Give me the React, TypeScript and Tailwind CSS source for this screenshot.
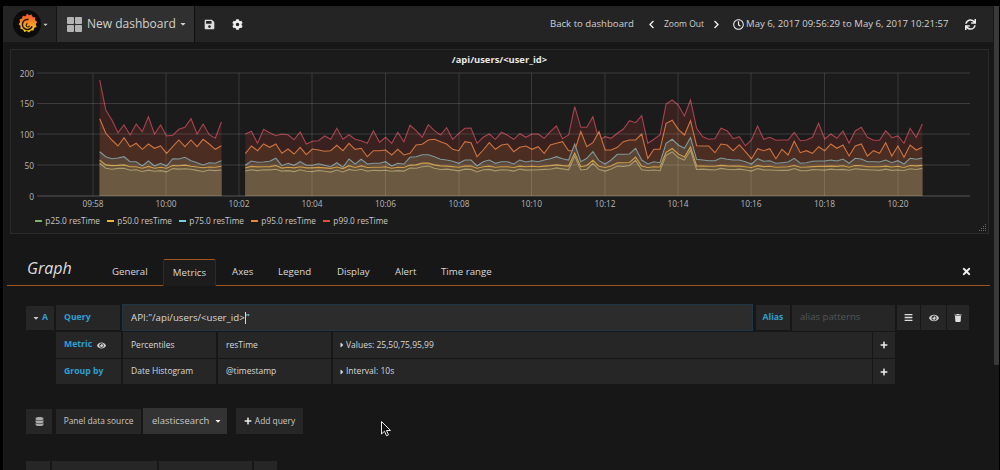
import React from "react";
import {
  FaCaretDown,
  FaCaretRight,
  FaChevronLeft,
  FaChevronRight,
  FaCog,
  FaDatabase,
  FaEye,
  FaPlus,
  FaRegClock,
  FaSave,
  FaSync,
  FaTimes,
  FaTrash,
  FaBars,
} from "react-icons/fa";

// series are y values read off the picture (zoomed coords, y = 60 + v / 3)
const p99A = [60, 150, 180, 218, 195, 225, 192, 215, 170, 222, 195, 228, 226, 208, 202, 176, 222, 192, 224, 235, 186];
const p95A = [176, 220, 240, 258, 233, 260, 250, 268, 252, 265, 258, 280, 260, 240, 260, 240, 260, 238, 252, 268, 257];
const p75A = [275, 290, 296, 294, 290, 305, 305, 318, 303, 318, 310, 318, 296, 297, 292, 302, 308, 315, 308, 310, 302];

const p99B = [
  222, 214, 250, 208, 218, 227, 222, 224, 239, 216, 252, 244, 242, 228, 238,
  205, 238, 224, 238, 242, 250, 212, 247, 232, 250, 217, 245, 196, 212, 232, 194, 212, 225, 203, 238, 220, 205, 204,
  250, 232, 222, 238, 217, 226, 238, 221, 232, 222, 222, 235, 215, 198, 236, 225, 140, 202, 202, 170, 240, 230, 235,
  220, 207, 182, 188, 167, 250, 238, 225,
  132, 120, 135, 168, 120, 205, 230, 238, 236, 205, 212, 236, 230, 257, 240, 198, 238, 232, 241, 240, 240, 217, 242,
  240, 232, 190, 237, 222, 235, 213, 250, 213, 202, 232, 241, 241, 212, 233, 228, 250, 205, 232, 192,
];
const p95B = [
  281, 258, 272, 252, 262, 252, 280, 267, 282, 262, 284, 267, 270, 274, 272,
  256, 272, 250, 268, 265, 290, 272, 272, 270, 285, 268, 285, 280, 255, 253, 240, 238, 245, 252, 268, 272, 245, 248,
  290, 270, 248, 268, 255, 252, 275, 262, 258, 268, 260, 280, 255, 250, 245, 272, 272, 214, 260, 248, 215, 270, 270,
  262, 245, 240, 240, 222, 295, 268, 268,
  190, 181, 208, 225, 182, 257, 258, 258, 278, 252, 255, 272, 254, 275, 296, 266, 272, 266, 296, 268, 285, 244, 278,
  272, 280, 260, 272, 252, 265, 255, 288, 258, 252, 288, 272, 280, 248, 288, 258, 292, 255, 270, 262,
];
const p75B = [
  316, 303, 307, 306, 304, 295, 317, 310, 316, 305, 316, 316, 311, 316, 320,
  308, 322, 297, 312, 298, 312, 310, 310, 305, 318, 310, 312, 292, 290, 284, 284, 290, 298, 300, 304, 310, 300, 300,
  318, 305, 300, 310, 305, 305, 312, 300, 306, 302, 305, 300, 296, 290, 296, 300, 252, 305, 295, 275, 302, 312, 300,
  283, 283, 282, 265, 300, 312, 305, 308,
  250, 238, 255, 265, 233, 298, 300, 302, 302, 294, 298, 300, 300, 305, 312, 296, 304, 302, 310, 308, 306, 295, 310,
  308, 304, 303, 303, 300, 303, 297, 310, 295, 297, 305, 305, 306, 300, 308, 302, 312, 295, 298, 294,
];

const toP50 = (v: number) => (v >= 290 ? 320 + (v - 305) * 0.35 : 315 - (290 - v) * 0.95);
const toP25 = (v: number, i: number) => toP50(v) + 9 + (i % 3);

const segA = { x0: 98.7, x1: 220.4 };
const segB = { x0: 244.3, x1: 921.3 };

function pts(vals: number[], seg: { x0: number; x1: number }) {
  const step = (seg.x1 - seg.x0) / (vals.length - 1);
  return vals.map((v, i) => `${(seg.x0 + i * step).toFixed(1)},${(60 + v / 3).toFixed(1)}`).join(" ");
}

function Series({ vals, fill, stroke }: { vals: number[]; fill: string; stroke: string }) {
  return (
    <>
      <polygon points={`${segA.x0},196 ${pts(vals.slice(0, 21), segA)} ${segA.x1},196`} fill={fill} />
      <polygon points={`${segB.x0},196 ${pts(vals.slice(21), segB)} ${segB.x1},196`} fill={fill} />
      <polyline points={pts(vals.slice(0, 21), segA)} fill="none" stroke={stroke} strokeWidth="1.1" />
      <polyline points={pts(vals.slice(21), segB)} fill="none" stroke={stroke} strokeWidth="1.1" />
    </>
  );
}

const yTicks = [
  { label: "200", y: 73 },
  { label: "150", y: 103.5 },
  { label: "100", y: 134 },
  { label: "50", y: 165 },
  { label: "0", y: 196 },
];
const xTicks = [
  { label: "09:58", x: 92 },
  { label: "10:00", x: 165 },
  { label: "10:02", x: 238 },
  { label: "10:04", x: 311 },
  { label: "10:06", x: 384.5 },
  { label: "10:08", x: 458 },
  { label: "10:10", x: 530.5 },
  { label: "10:12", x: 604 },
  { label: "10:14", x: 677 },
  { label: "10:16", x: 750 },
  { label: "10:18", x: 823.5 },
  { label: "10:20", x: 897 },
];

function Chart() {
  const p99 = [...p99A, ...p99B];
  const p95 = [...p95A, ...p95B];
  const p75 = [...p75A, ...p75B];
  const p50 = p75.map(toP50);
  const p25 = p75.map(toP25);
  return (
    <svg width="979" height="144" viewBox="10 66 979 144" className="block">
      <Series vals={p99} fill="#38211e" stroke="#a8434f" />
      <Series vals={p95} fill="#4b2d21" stroke="#cf7440" />
      <Series vals={p75} fill="#5a4436" stroke="#7f9a9c" />
      <Series vals={p50} fill="#66523b" stroke="#cf9f48" />
      <Series vals={p25} fill="#6b5a41" stroke="#a89a6c" />
      {yTicks.map((t) => (
        <g key={t.label}>
          <line x1="36" x2="969" y1={t.y} y2={t.y} stroke="#ffffff" strokeOpacity={t.y === 196 ? 0.25 : 0.14} />
          <text x="33" y={t.y + 3.5} textAnchor="end" fontSize="8.3" fill="#b9b9b9">
            {t.label}
          </text>
        </g>
      ))}
      {xTicks.map((t) => (
        <g key={t.label}>
          <line x1={t.x} x2={t.x} y1="73" y2="196" stroke="#ffffff" strokeOpacity="0.13" />
          <text x={t.x} y="207" textAnchor="middle" fontSize="8.3" fill="#b9b9b9">
            {t.label}
          </text>
        </g>
      ))}
    </svg>
  );
}

function GrafanaLogo() {
  return (
    <svg width="28" height="28" viewBox="0 0 28 28">
      <defs>
        <linearGradient id="gf" x1="0" y1="1" x2="0" y2="0">
          <stop offset="0" stopColor="#fcd01f" />
          <stop offset="1" stopColor="#f1502a" />
        </linearGradient>
      </defs>
      <circle cx="14" cy="14" r="14" fill="#0b0b0b" />
      <path
        d="M14 3.5l2 1.8 2.7-.8 1 2.4 2.6.7-.2 2.7 2.1 1.7-1.5 2.2.9 2.6-2.4 1.1-.7 2.7-2.7-.1-1.8 2-2.2-1.4-2.6.8-1.1-2.4-2.7-.8.2-2.7-2-1.7 1.5-2.2-.6-2.6 2.5-1.1.8-2.6 2.7.4z"
        fill="url(#gf)"
      />
      <path d="M15.5 9.6a5 5 0 1 0 3.6 6.8" fill="none" stroke="#1a120a" strokeWidth="1.5" />
      <path d="M14.6 13.6a1.7 1.7 0 1 0 1.9 2" fill="none" stroke="#1a120a" strokeWidth="1.1" />
    </svg>
  );
}

function Legend() {
  const items = [
    { c: "bg-[#7EB26D]", t: "p25.0 resTime" },
    { c: "bg-[#EAB839]", t: "p50.0 resTime" },
    { c: "bg-[#6ED0E0]", t: "p75.0 resTime" },
    { c: "bg-[#EF843C]", t: "p95.0 resTime" },
    { c: "bg-[#E24D42]", t: "p99.0 resTime" },
  ];
  return (
    <div className="flex items-center gap-[7px] pl-[24px] mt-[5px] text-[8.3px] leading-[12px] text-[#c8c8c8]">
      {items.map((i) => (
        <div key={i.t} className="flex items-center gap-[3px] w-[65px] whitespace-nowrap">
          <span className={`w-[9px] h-[2px] ${i.c}`} />
          <span>{i.t}</span>
        </div>
      ))}
    </div>
  );
}

function Cell({ w, className, children }: { w: string; className?: string; children?: React.ReactNode }) {
  return <div className={`flex items-center shrink-0 whitespace-nowrap bg-[#262626] ${w} ${className ?? ""}`}>{children}</div>;
}

export default function App() {
  return (
    <div
      className="relative w-[1000px] h-[470px] overflow-hidden bg-black pt-[6px] pl-[3px] pr-px text-[#d8d9da]"
      style={{ fontFamily: '"Open Sans", sans-serif' }}
    >
      <div className="relative w-[996px] h-[464px] flex flex-col bg-[#171717]">
        {/* Navbar */}
        <div className="flex items-center w-[990px] h-[36px] shrink-0 bg-[#242425] text-[#d0d0d0]">
          <div className="flex items-center w-[54px] h-full pl-[10px] border-r border-[#141414]">
            <GrafanaLogo />
            <FaCaretDown className="ml-[1px] text-[7px] text-[#cccccc]" />
          </div>
          <div className="flex items-center w-[138px] h-full pl-[10px] bg-[#303031] border-r border-[#0e0e0e]">
            <span className="grid grid-cols-2 gap-px w-[15px] h-[15px] mr-[5px]">
              <i className="bg-[#b4b4b4] rounded-[1px]" />
              <i className="bg-[#b4b4b4] rounded-[1px]" />
              <i className="bg-[#b4b4b4] rounded-[1px]" />
              <i className="bg-[#b4b4b4] rounded-[1px]" />
            </span>
            <span className="text-[12px] whitespace-nowrap">New dashboard</span>
            <FaCaretDown className="ml-[3px] text-[8px]" />
          </div>
          <FaSave className="ml-[9px] text-[11px] text-[#dddddd]" />
          <FaCog className="ml-[17px] text-[11px] text-[#eeeeee]" />
          <span className="ml-[307px] w-[84px] text-[9.6px] whitespace-nowrap">Back to dashboard</span>
          <FaChevronLeft className="ml-[13px] text-[9px] text-[#eeeeee]" />
          <span className="ml-[8px] w-[40px] text-[8.5px] whitespace-nowrap">Zoom Out</span>
          <FaChevronRight className="ml-[8px] text-[9px] text-[#eeeeee]" />
          <FaRegClock className="ml-[12px] text-[11px] text-[#eeeeee]" />
          <span className="ml-[2px] w-[203px] text-[9.6px] whitespace-nowrap">May 6, 2017 09:56:29 to May 6, 2017 10:21:57</span>
          <FaSync className="ml-[16px] text-[11px] text-[#eeeeee]" />
        </div>

        {/* Graph panel */}
        <div className="ml-[7px] mt-[7px] w-[979px] h-[185px] shrink-0 bg-[#1b1b1b] border border-[#2a2a2a] relative">
          <div className="text-center text-[9.4px] leading-[14px] font-bold text-[#e8e8e8] pt-[3px] h-[16px]">
            {"/api/users/<user_id>"}
          </div>
          <Chart />
          <Legend />
          <svg width="7" height="7" viewBox="0 0 7 7" className="absolute right-[2px] bottom-[2px]">
            <path d="M6 0h1v1H6zM4 2h1v1H4zM6 2h1v1H6zM2 4h1v1H2zM4 4h1v1H4zM6 4h1v1H6zM0 6h1v1H0zM2 6h1v1H2zM4 6h1v1H4zM6 6h1v1H6z" fill="#666" />
          </svg>
        </div>

        {/* Editor tabs */}
        <div className="ml-[4px] mt-[25px] w-[983px] h-[27px] shrink-0 flex items-end border-b border-[#a0561f] relative text-[9.7px]">
          <span className="ml-[20px] mb-[6px] w-[45px] text-[16px] leading-[22px] italic text-[#dddddd]">Graph</span>
          <span className="ml-[40px] mb-[6px] w-[35px] leading-[14px] whitespace-nowrap">General</span>
          <span className="ml-[16px] -mb-px h-[27px] w-[53px] flex items-center justify-center bg-[#1c1c1c] border border-b-0 border-[#2e2a26] border-t-[#a0561f] rounded-t-[2px]">
            Metrics
          </span>
          <span className="ml-[16px] mb-[6px] w-[20px] leading-[14px]">Axes</span>
          <span className="ml-[26px] mb-[6px] w-[33px] leading-[14px]">Legend</span>
          <span className="ml-[26px] mb-[6px] w-[32px] leading-[14px]">Display</span>
          <span className="ml-[26px] mb-[6px] w-[20px] leading-[14px]">Alert</span>
          <span className="ml-[26px] mb-[6px] leading-[14px] whitespace-nowrap">Time range</span>
          <FaTimes className="absolute right-[18px] top-[7px] text-[11px] text-[#eeeeee]" />
        </div>

        {/* Query row */}
        <div className="ml-[23px] mt-[18px] flex items-center h-[27px] shrink-0 text-[8.7px]">
          <Cell w="w-[28px] h-[24px]" className="justify-center gap-[2px] bg-[#222222] text-[#2f9fd0] font-bold">
            <FaCaretDown className="text-[8px] text-[#cccccc]" />A
          </Cell>
          <Cell w="w-[64px] h-[25px] ml-[2px] pl-[8px] pt-px" className="text-[#2f9fd0] font-bold">
            Query
          </Cell>
          <div className="ml-[2px] w-[631px] h-[27px] flex items-center pl-[8px] pt-px bg-[#2c2c2d] border border-[#1f3644] text-[9.7px] text-[#d8d9da]">
            {'API:"/api/users/<user_id>'}
            <span className="w-px h-[12px] bg-[#d8d9da]" />"
          </div>
          <Cell w="w-[34px] h-[25px] ml-[3px] pt-px" className="justify-center text-[#2f9fd0] font-bold">
            Alias
          </Cell>
          <Cell w="w-[103px] h-[26px] ml-[2px] pl-[8px]" className="bg-[#2d2d2e] text-[#555555] text-[9.6px]">
            alias patterns
          </Cell>
          <Cell w="w-[23px] h-[25px] ml-[2px]" className="justify-center text-[#dddddd]">
            <FaBars className="text-[9px]" />
          </Cell>
          <Cell w="w-[25px] h-[25px] ml-px" className="justify-center text-[#cfcfcf]">
            <FaEye className="text-[10px]" />
          </Cell>
          <Cell w="w-[22px] h-[25px] ml-px" className="justify-center text-[#dddddd]">
            <FaTrash className="text-[8px]" />
          </Cell>
        </div>

        {/* Metric row */}
        <div className="ml-[53px] mt-px flex h-[26px] shrink-0 text-[8.5px] gap-[2px]">
          <Cell w="w-[65px] pl-[8px]" className="text-[#2f9fd0] font-bold text-[8.7px] gap-[5px]">
            Metric
            <FaEye className="text-[9px] text-[#cfcfcf]" />
          </Cell>
          <Cell w="w-[93px] pl-[8px]">Percentiles</Cell>
          <Cell w="w-[113px] pl-[8px]">resTime</Cell>
          <Cell w="w-[539px] pl-[5px]">
            <FaCaretRight className="text-[8px]" />
            <span>Values: 25,50,75,95,99</span>
          </Cell>
          <Cell w="w-[22px] -ml-px" className="justify-center text-[#eeeeee]">
            <FaPlus className="text-[8px]" />
          </Cell>
        </div>

        {/* Group by row */}
        <div className="ml-[53px] mt-px flex h-[25px] shrink-0 text-[8.5px] gap-[2px]">
          <Cell w="w-[65px] pl-[8px]" className="text-[#2f9fd0] font-bold text-[8.7px]">
            Group by
          </Cell>
          <Cell w="w-[93px] pl-[8px]">Date Histogram</Cell>
          <Cell w="w-[113px] pl-[8px]">@timestamp</Cell>
          <Cell w="w-[539px] pl-[5px]">
            <FaCaretRight className="text-[8px]" />
            <span>Interval: 10s</span>
          </Cell>
          <Cell w="w-[22px] -ml-px" className="justify-center text-[#eeeeee]">
            <FaPlus className="text-[8px]" />
          </Cell>
        </div>

        {/* Data source row */}
        <div className="ml-[23px] mt-[24px] flex items-center h-[26px] shrink-0 text-[8.4px] text-[#c8c8c8]">
          <Cell w="w-[26px] h-[25px]" className="justify-center bg-[#232323]">
            <FaDatabase className="text-[9px] text-[#aaaaaa]" />
          </Cell>
          <Cell w="w-[85px] h-[25px] ml-[4px]" className="justify-center">
            Panel data source
          </Cell>
          <Cell w="w-[84px] h-[26px] ml-[2px] pl-[9px]" className="bg-[#333334] text-[9.5px] gap-[5px]">
            elasticsearch
            <FaCaretDown className="text-[8px] text-[#eeeeee]" />
          </Cell>
          <Cell w="w-[67px] h-[26px] ml-[9px]" className="justify-center gap-[3px]">
            <FaPlus className="text-[8px] text-[#eeeeee]" />
            Add query
          </Cell>
        </div>

        {/* Next row, cut off by the window */}
        <div className="ml-[23px] mt-[27px] flex h-[9px] shrink-0 gap-[2px]">
          <div className="w-[24px] bg-[#262626]" />
          <div className="w-[105px] bg-[#262626]" />
          <div className="w-[93px] bg-[#262626]" />
          <div className="w-[23px] bg-[#262626]" />
        </div>

        {/* Scrollbar thumb */}
        <div className="absolute right-0 top-0 w-[5px] h-[359px] bg-[#3a3a3a] rounded-b-[1px]" />
      </div>

      {/* Mouse pointer */}
      <svg width="11" height="16" viewBox="0 0 11 16" className="absolute left-[381px] top-[421px]">
        <path d="M.5.5v12.5l3-2.8 2 4.6 2-.9-2-4.4h4z" fill="#111" stroke="#e8e8e8" strokeWidth="1" />
      </svg>
    </div>
  );
}
